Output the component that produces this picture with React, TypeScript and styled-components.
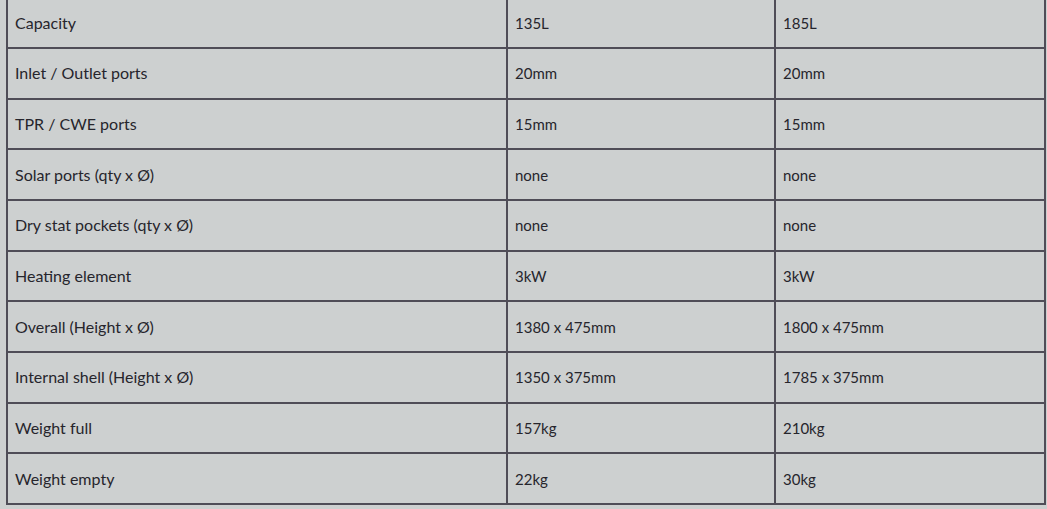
import React from 'react'
import styled, { createGlobalStyle } from 'styled-components'

const GlobalStyle = createGlobalStyle`
    html, body {
        margin: 0;
        padding: 0;
        background: #cdd0d0;
    }
    body {
        font-family: Lato, "Noto Sans", sans-serif;
        color: #26252c;
    }
`

const Page = styled.div`
    padding: 0 3px 0 6px;
    margin-top: -3.5px;
`

const SpecTable = styled.table`
    width: 1038px;
    border-collapse: collapse;
    table-layout: fixed;
    border: 2px solid #4f4d57;
`

// label column is a touch larger than the value columns
const Cell = styled.td<{ $width: number; $label?: boolean }>`
    width: ${(p) => p.$width}px;
    height: 50.65px;
    box-sizing: border-box;
    padding: 0 7px;
    border: 2px solid #4f4d57;
    font-size: ${(p) => (p.$label ? 16 : 15)}px;
    line-height: 18px;
    vertical-align: middle;
    text-align: left;
`

const specs: [string, string, string][] = [
    ['Capacity', '135L', '185L'],
    ['Inlet / Outlet ports', '20mm', '20mm'],
    ['TPR / CWE ports', '15mm', '15mm'],
    ['Solar ports (qty x Ø)', 'none', 'none'],
    ['Dry stat pockets (qty x Ø)', 'none', 'none'],
    ['Heating element', '3kW', '3kW'],
    ['Overall (Height x Ø)', '1380 x 475mm', '1800 x 475mm'],
    ['Internal shell (Height x Ø)', '1350 x 375mm', '1785 x 375mm'],
    ['Weight full', '157kg', '210kg'],
    ['Weight empty', '22kg', '30kg'],
]

const App: React.FC = () => {
    return (
        <>
            <GlobalStyle />
            <Page>
                <SpecTable>
                    <tbody>
                        {specs.map(([label, small, large]) => (
                            <tr key={label}>
                                <Cell $width={500} $label>{label}</Cell>
                                <Cell $width={268}>{small}</Cell>
                                <Cell $width={270}>{large}</Cell>
                            </tr>
                        ))}
                    </tbody>
                </SpecTable>
            </Page>
        </>
    )
}

export default App
